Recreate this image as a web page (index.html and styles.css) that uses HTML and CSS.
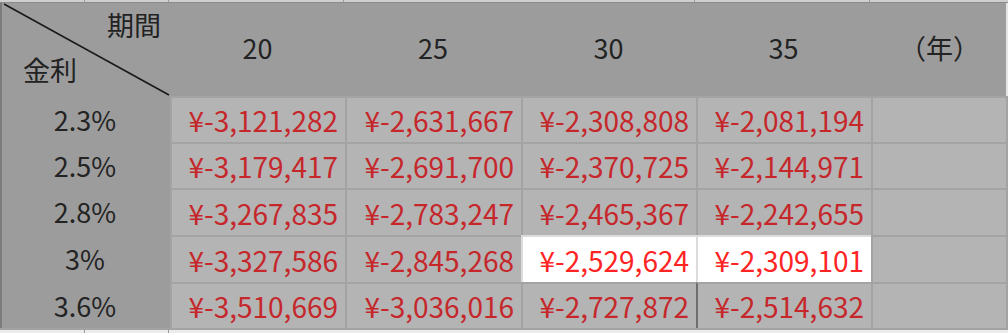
FILE: index.html
```html
<!DOCTYPE html>
<html lang="ja">
<head>
<meta charset="utf-8">
<title>ローン比較表</title>
<link rel="stylesheet" href="styles.css">
</head>
<body>
<div class="sheet">
  <div class="top-strip">
    <span class="tick t1"></span><span class="tick t2"></span><span class="tick t3"></span><span class="tick t4"></span><span class="tick t5"></span>
  </div>
  <div class="grid">
    <div class="corner">
      <svg class="diag" width="168" height="93" viewBox="0 0 168 93"><line x1="2" y1="1" x2="167" y2="92" stroke="#1a1a1a" stroke-width="1.6"/></svg>
      <span class="corner-top">期間</span>
      <span class="corner-bottom">金利</span>
    </div>
    <div class="head">20</div>
    <div class="head">25</div>
    <div class="head">30</div>
    <div class="head">35</div>
    <div class="head">（年）</div>

    <div class="rate">2.3%</div>
    <div class="cell">¥-3,121,282</div>
    <div class="cell">¥-2,631,667</div>
    <div class="cell">¥-2,308,808</div>
    <div class="cell">¥-2,081,194</div>
    <div class="cell"></div>

    <div class="rate">2.5%</div>
    <div class="cell">¥-3,179,417</div>
    <div class="cell">¥-2,691,700</div>
    <div class="cell">¥-2,370,725</div>
    <div class="cell">¥-2,144,971</div>
    <div class="cell"></div>

    <div class="rate">2.8%</div>
    <div class="cell">¥-3,267,835</div>
    <div class="cell">¥-2,783,247</div>
    <div class="cell">¥-2,465,367</div>
    <div class="cell">¥-2,242,655</div>
    <div class="cell"></div>

    <div class="rate">3%</div>
    <div class="cell">¥-3,327,586</div>
    <div class="cell">¥-2,845,268</div>
    <div class="cell sel">¥-2,529,624</div>
    <div class="cell sel">¥-2,309,101</div>
    <div class="cell"></div>

    <div class="rate">3.6%</div>
    <div class="cell">¥-3,510,669</div>
    <div class="cell">¥-3,036,016</div>
    <div class="cell">¥-2,727,872</div>
    <div class="cell edge">¥-2,514,632</div>
    <div class="cell"></div>
  </div>
  <div class="bottom-strip">
    <span class="tick b1"></span><span class="tick b2"></span>
  </div>
</div>
</body>
</html>
```

FILE: styles.css
```css
html, body {
  margin: 0;
  padding: 0;
  background: #e6e6e6;
}

.sheet {
  width: 1008px;
  height: 333px;
  display: flex;
  flex-direction: column;
  font-family: "Noto Sans CJK JP", "Noto Sans", sans-serif;
  overflow: hidden;
}

.top-strip {
  height: 3px;
  flex: none;
  background: #cfcfcf;
  border-bottom: 1px solid #8a8a8a;
  box-sizing: border-box;
  position: relative;
}

.tick {
  position: absolute;
  top: 0;
  width: 1px;
  height: 100%;
  background: #9a9a9a;
}
.t1 { left: 84px; }
.t2 { left: 168px; }
.t3 { left: 343px; }
.t4 { left: 694px; }
.t5 { left: 869px; }

.grid {
  width: 1006px;
  flex: none;
  display: grid;
  grid-template-columns: 168px 175px 176px 175px 175px 137px;
  grid-template-rows: 93px 46px 46px 47px 47px 46px;
  background: #9c9c9c;
  border-left: 2px solid #7c7c7c;
  box-sizing: border-box;
}

.corner {
  position: relative;
  color: #222;
  font-size: 27px;
}

.diag {
  position: absolute;
  left: 0;
  top: 0;
}

.corner-top {
  position: absolute;
  left: 105px;
  top: 2px;
}

.corner-bottom {
  position: absolute;
  left: 21px;
  top: 47px;
}

.head {
  display: flex;
  align-items: center;
  justify-content: center;
  padding-bottom: 4px;
  font-size: 27px;
  color: #232323;
  box-sizing: border-box;
}

.rate {
  display: flex;
  align-items: center;
  justify-content: center;
  font-size: 27px;
  color: #232323;
  margin-left: -2px;
}

.cell {
  display: flex;
  align-items: center;
  justify-content: flex-end;
  padding-right: 7px;
  font-size: 28px;
  color: #c5272b;
  background: #b4b4b4;
  border-top: 2px solid #a3a3a3;
  border-left: 2px solid #a3a3a3;
  box-sizing: border-box;
  white-space: nowrap;
}

.cell.sel {
  background: #ffffff;
  color: #ff2424;
  border-color: #dcdcdc;
}

.cell.edge {
  border-left-color: #6e6e6e;
}

.grid > .cell:nth-child(6n) {
  border-right: 2px solid #a3a3a3;
}

.bottom-strip {
  flex: 1;
  background: #ececec;
  border-top: 2px solid #a3a3a3;
  position: relative;
}
.b1 { left: 84px; }
.b2 { left: 168px; }
```
